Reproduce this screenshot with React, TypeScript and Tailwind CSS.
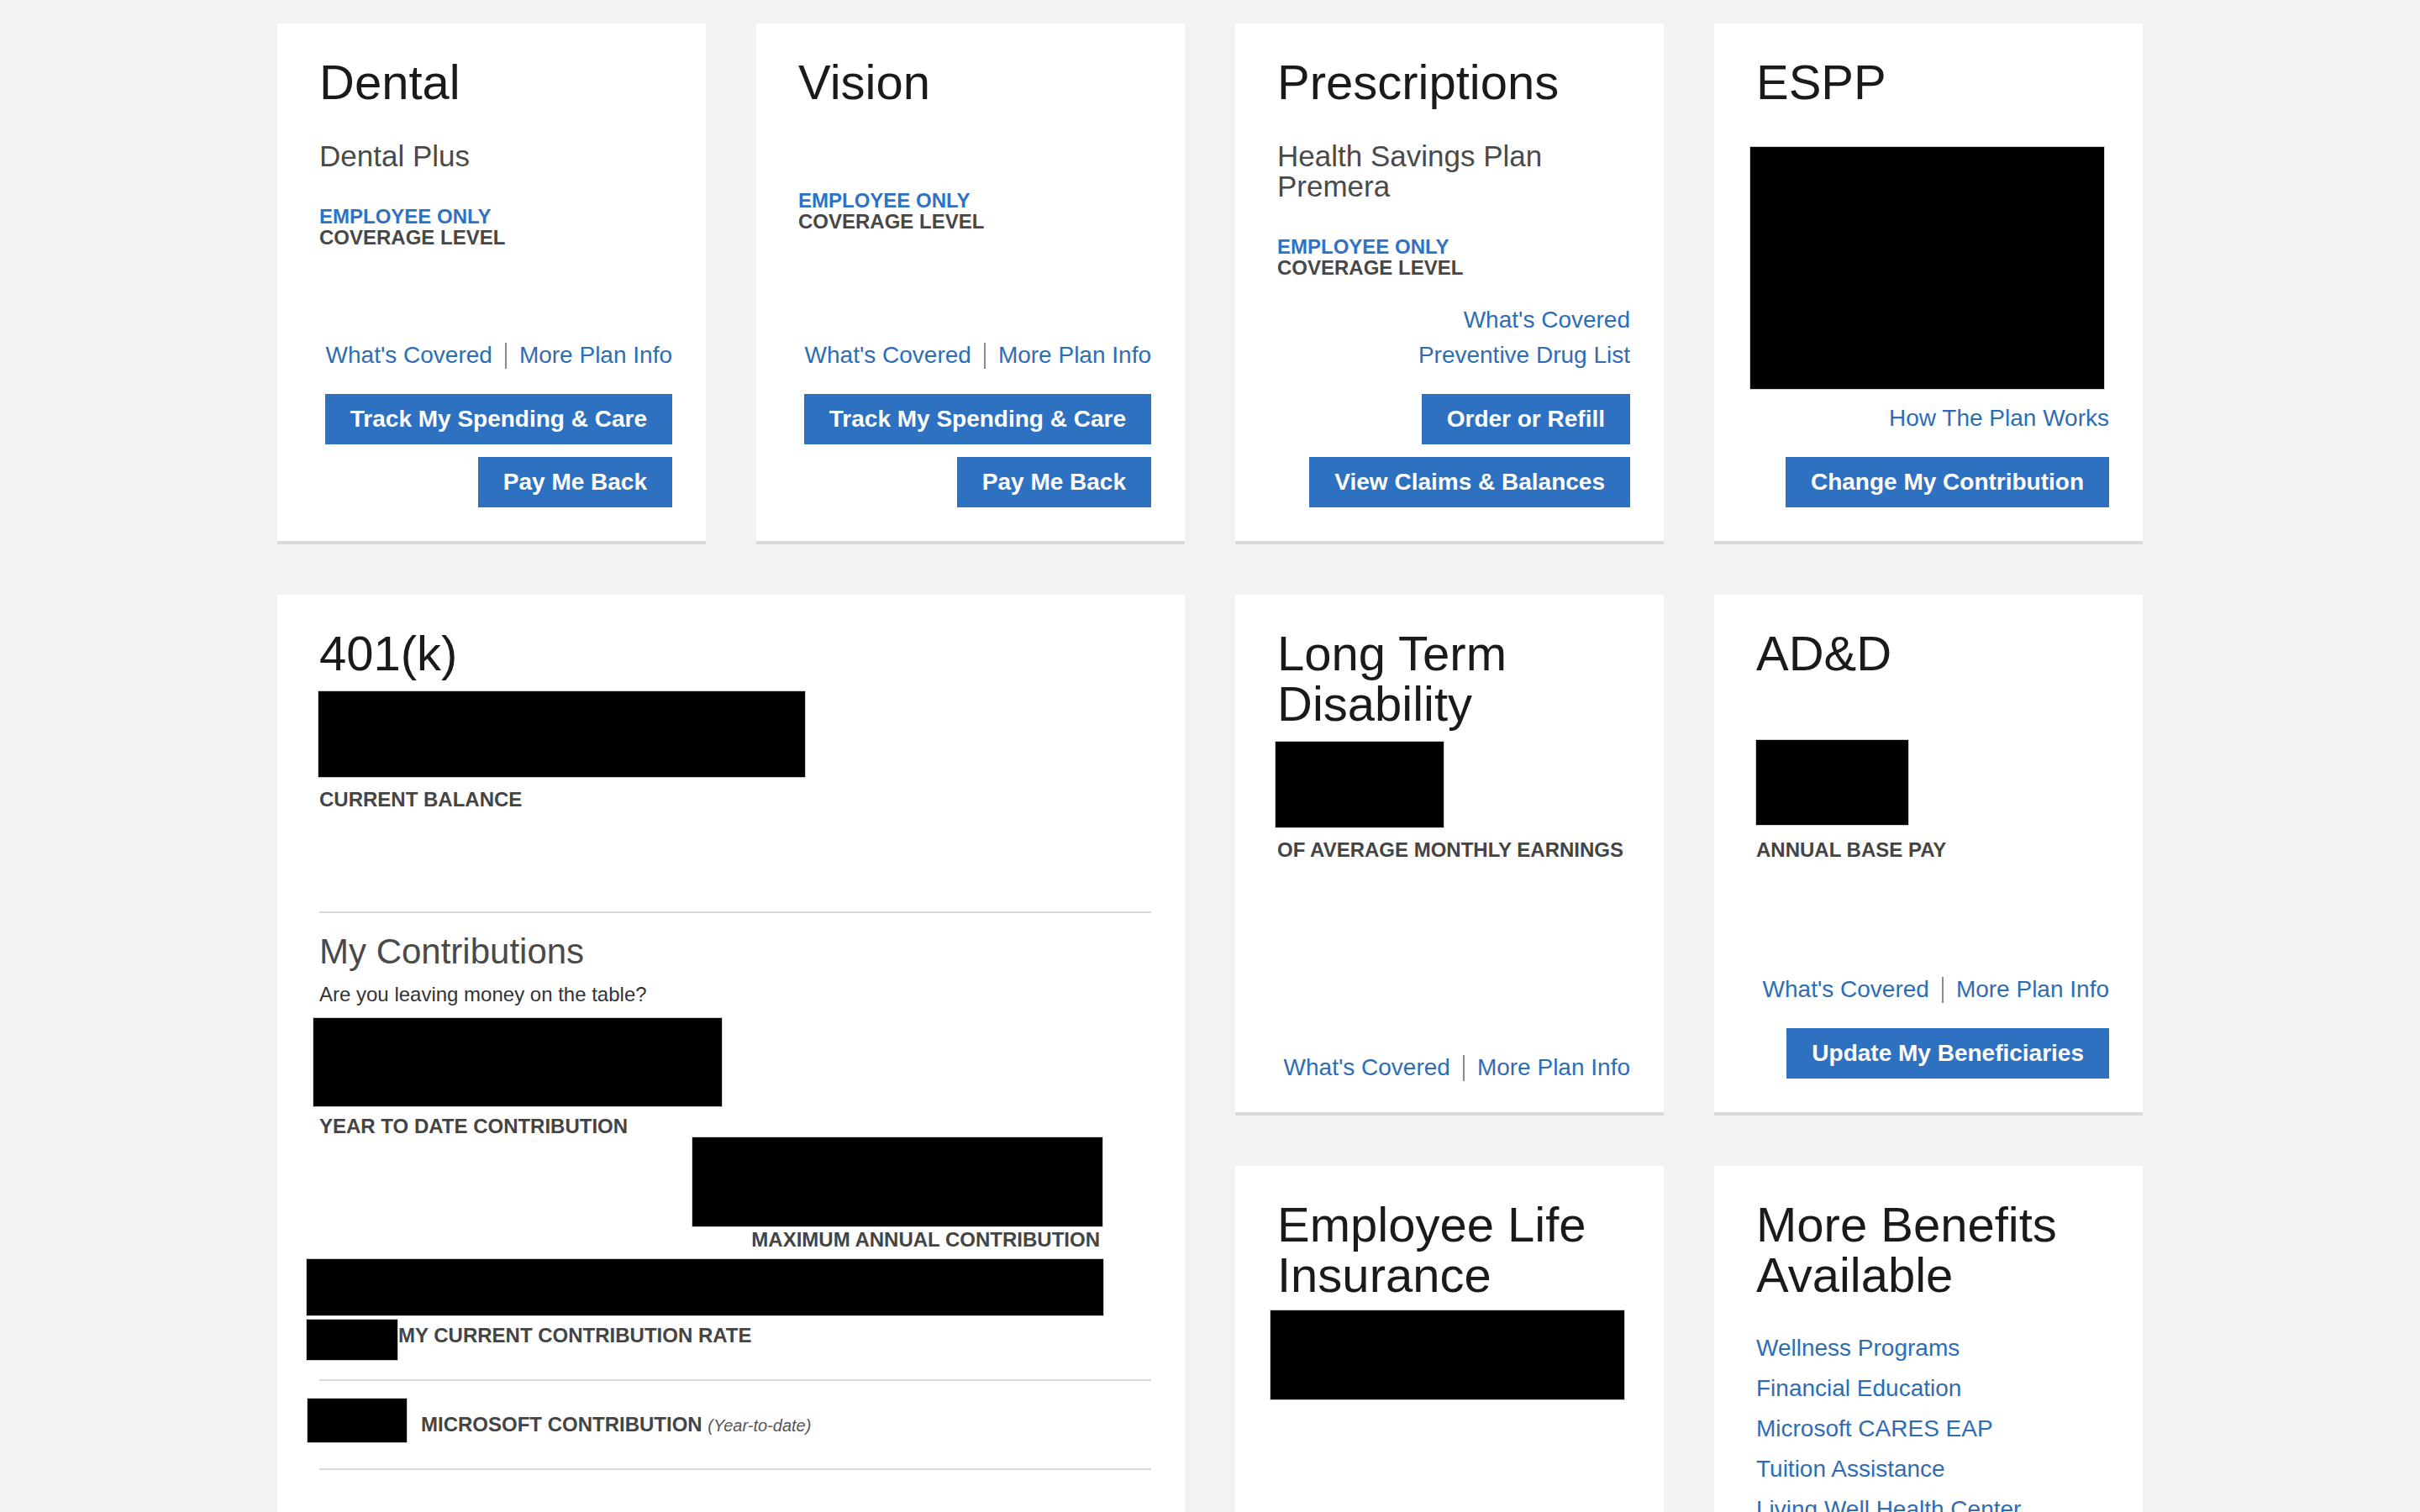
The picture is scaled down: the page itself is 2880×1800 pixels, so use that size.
import React from 'react';

const Card = ({ children, className = '' }: any) => (
    <div className={`bg-white border-b-4 border-[#d9d9d9] pt-10 pr-10 pb-10 pl-[50px] flex flex-col min-h-[620px] ${className}`}>
        {children}
    </div>
);

const Title = ({ children }: any) => (
    <h2 className="text-[58px] leading-[60px] text-[#1a1a1a] font-normal">{children}</h2>
);

const Redacted = ({ className = '' }: any) => (
    <div className={`bg-black border border-[#cfcfcf] ${className}`} />
);

const Label = ({ children, className = '' }: any) => (
    <p className={`text-[24px] leading-[25px] font-bold text-[#444] uppercase ${className}`}>{children}</p>
);

const Coverage = ({ className = '' }: any) => (
    <div className={`text-[24px] leading-[25px] font-bold ${className}`}>
        <p className="text-[#2f72c4]">EMPLOYEE ONLY</p>
        <p className="text-[#474747]">COVERAGE LEVEL</p>
    </div>
);

const Links = ({ className = '' }: any) => (
    <div className={`flex justify-end items-center text-[28px] leading-[42px] text-[#2e6db4] ${className}`}>
        <a>What's Covered</a>
        <span className="w-[2px] h-[31px] bg-[#8a8a8a] mx-[15px]" />
        <a>More Plan Info</a>
    </div>
);

const Button = ({ children }: any) => (
    <button className="h-[60px] px-[30px] bg-[#2f71c1] text-white font-bold text-[28px] leading-[60px] whitespace-nowrap">
        {children}
    </button>
);

const Buttons = ({ children }: any) => (
    <div className="flex flex-col items-end gap-[15px] mt-[25px]">{children}</div>
);

export default function Benefits() {
    return (
        <div className="min-h-screen bg-[#f2f2f2] font-['Liberation_Sans',Arial,sans-serif]">
            <div className="w-[2220px] mx-auto pt-[28px] flex flex-col gap-[60px]">
                {/* Row 1 */}
                <div className="grid grid-cols-[repeat(4,510px)] gap-[60px]">
                    <Card>
                        <Title>Dental</Title>
                        <p className="mt-[40px] text-[35px] leading-[36px] text-[#4a4a4a]">Dental Plus</p>
                        <Coverage className="mt-[41px]" />
                        <div className="mt-auto">
                            <Links />
                            <Buttons>
                                <Button>Track My Spending &amp; Care</Button>
                                <Button>Pay Me Back</Button>
                            </Buttons>
                        </div>
                    </Card>

                    <Card>
                        <Title>Vision</Title>
                        <Coverage className="mt-[98px]" />
                        <div className="mt-auto">
                            <Links />
                            <Buttons>
                                <Button>Track My Spending &amp; Care</Button>
                                <Button>Pay Me Back</Button>
                            </Buttons>
                        </div>
                    </Card>

                    <Card>
                        <Title>Prescriptions</Title>
                        <p className="mt-[40px] text-[35px] leading-[36px] text-[#4a4a4a]">
                            Health Savings Plan
                            <br />
                            Premera
                        </p>
                        <Coverage className="mt-[41px]" />
                        <div className="mt-auto">
                            <div className="flex flex-col items-end text-[28px] leading-[42px] text-[#2e6db4]">
                                <a>What's Covered</a>
                                <a>Preventive Drug List</a>
                            </div>
                            <Buttons>
                                <Button>Order or Refill</Button>
                                <Button>View Claims &amp; Balances</Button>
                            </Buttons>
                        </div>
                    </Card>

                    <Card>
                        <Title>ESPP</Title>
                        <Redacted className="mt-[46px] -ml-[8px] w-[423px] h-[290px]" />
                        <div className="mt-auto">
                            <div className="flex justify-end text-[28px] leading-[42px] text-[#2e6db4]">
                                <a>How The Plan Works</a>
                            </div>
                            <Buttons>
                                <Button>Change My Contribution</Button>
                            </Buttons>
                        </div>
                    </Card>
                </div>

                {/* Row 2 + 3 */}
                <div className="flex gap-[60px] items-start">
                    {/* 401(k) */}
                    <Card className="w-[1080px] shrink-0 pb-[80px]">
                        <Title>401(k)</Title>
                        <Redacted className="mt-[14px] -ml-[2px] w-[581px] h-[104px]" />
                        <Label className="mt-[13px]">Current Balance</Label>
                        <div className="mt-[121px] h-[2px] bg-[#d9d9d9]" />
                        <h3 className="mt-[22px] text-[42px] leading-[48px] text-[#4a4a4a]">My Contributions</h3>
                        <p className="mt-[12px] text-[24px] leading-[30px] text-[#333]">Are you leaving money on the table?</p>
                        <Redacted className="mt-[12px] -ml-[8px] w-[488px] h-[107px]" />
                        <Label className="mt-[10px]">Year to Date Contribution</Label>
                        <Redacted className="ml-[443px] w-[490px] h-[108px]" />
                        <div className="w-[929px] mt-[2px] text-right">
                            <Label>Maximum Annual Contribution</Label>
                        </div>
                        <Redacted className="mt-[10px] -ml-[16px] w-[950px] h-[69px]" />
                        <div className="mt-[3px] -ml-[16px] flex items-start">
                            <Redacted className="w-[110px] h-[50px]" />
                            <Label className="pt-[7px]">My Current Contribution Rate</Label>
                        </div>
                        <div className="mt-[22px] h-[2px] bg-[#d9d9d9]" />
                        <div className="mt-[20px] -ml-[15px] flex items-start">
                            <Redacted className="w-[120px] h-[54px]" />
                            <p className="ml-[16px] pt-[19px] text-[24px] leading-[25px] font-bold text-[#444]">
                                MICROSOFT CONTRIBUTION{' '}
                                <span className="italic font-normal text-[20px] text-[#555]">(Year-to-date)</span>
                            </p>
                        </div>
                        <div className="mt-[30px] h-[2px] bg-[#d9d9d9]" />
                    </Card>

                    <div className="grid grid-cols-[repeat(2,510px)] gap-[60px]">
                        <Card>
                            <Title>
                                Long Term
                                <br />
                                Disability
                            </Title>
                            <Redacted className="mt-[14px] -ml-[3px] w-[202px] h-[104px]" />
                            <Label className="mt-[13px]">Of Average Monthly Earnings</Label>
                            <div className="mt-auto">
                                <Links className="-mb-[8px]" />
                            </div>
                        </Card>

                        <Card>
                            <div className="min-h-[120px]">
                                <Title>AD&amp;D</Title>
                            </div>
                            <Redacted className="mt-[12px] -ml-[1px] w-[183px] h-[103px]" />
                            <Label className="mt-[16px]">Annual Base Pay</Label>
                            <div className="mt-auto">
                                <Links />
                                <Buttons>
                                    <Button>Update My Beneficiaries</Button>
                                </Buttons>
                            </div>
                        </Card>

                        <Card>
                            <Title>
                                Employee Life
                                <br />
                                Insurance
                            </Title>
                            <Redacted className="mt-[11px] -ml-[9px] w-[423px] h-[108px]" />
                        </Card>

                        <Card>
                            <Title>
                                More Benefits
                                <br />
                                Available
                            </Title>
                            <ul className="mt-[33px] text-[28px] leading-[48px] text-[#2e6db4]">
                                <li>Wellness Programs</li>
                                <li>Financial Education</li>
                                <li>Microsoft CARES EAP</li>
                                <li>Tuition Assistance</li>
                                <li>Living Well Health Center</li>
                            </ul>
                        </Card>
                    </div>
                </div>
            </div>
        </div>
    );
}
